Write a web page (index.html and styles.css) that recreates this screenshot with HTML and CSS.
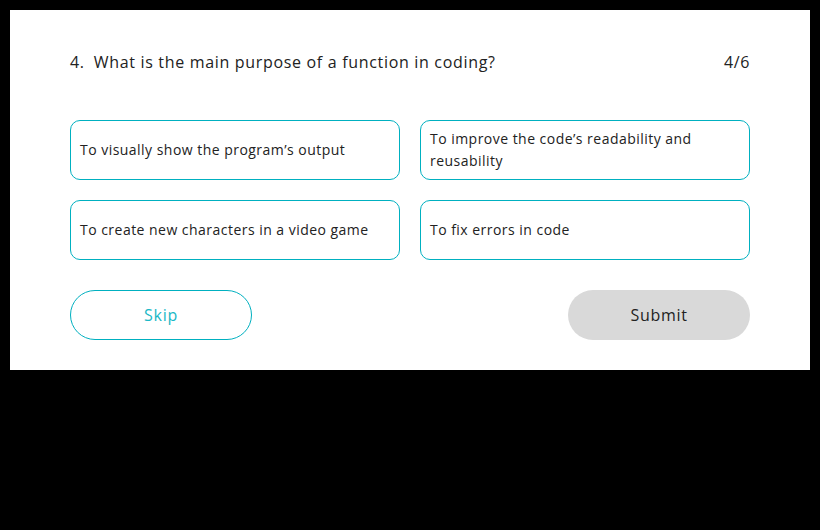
FILE: index.html
```html
<!DOCTYPE html>
<html lang="en">
<head>
<meta charset="utf-8">
<title>Quiz</title>
<link rel="stylesheet" href="styles.css">
</head>
<body>
<main class="panel">
  <header class="question-row">
    <h1 class="question"><span class="qnum">4.</span><span>What is the main purpose of a function in coding?</span></h1>
    <span class="progress">4/6</span>
  </header>
  <section class="options">
    <button class="option">To visually show the program’s output</button>
    <button class="option">To improve the code’s readability and reusability</button>
    <button class="option">To create new characters in a video game</button>
    <button class="option">To fix errors in code</button>
  </section>
  <footer class="actions">
    <button class="btn btn-skip">Skip</button>
    <button class="btn btn-submit">Submit</button>
  </footer>
</main>
</body>
</html>
```
FILE: styles.css
```css
* { box-sizing: border-box; }
html, body { margin: 0; }
body {
  background: #000;
  padding: 10px;
  width: 820px;
  height: 530px;
  font-family: "Open Sans", "DejaVu Sans", sans-serif;
  color: #222;
}
.panel {
  background: #fff;
  width: 800px;
  height: 360px;
  padding: 40px 60px 0 60px;
}
.question-row {
  display: flex;
  justify-content: space-between;
  align-items: center;
  height: 24px;
}
.question {
  margin: 0;
  font-size: 16px;
  font-weight: 400;
  letter-spacing: 0.68px;
  display: flex;
  gap: 9px;
}
.progress { font-size: 16px; letter-spacing: 0.6px; }
.option {
  font-family: inherit;
  font-size: 14px;
  line-height: 22px;
  letter-spacing: 0.47px;
  color: #222;
  text-align: left;
  background: #fff;
  border: 1px solid #00b0c0;
  border-radius: 10px;
  padding: 0 10px 0 9px;
  display: flex;
  align-items: center;
}
.options {
  margin-top: 46px;
  display: grid;
  grid-template-columns: 330px 330px;
  grid-auto-rows: 60px;
  gap: 20px;
}
.actions {
  margin-top: 30px;
  display: flex;
  justify-content: space-between;
}
.btn {
  width: 182px;
  height: 50px;
  border-radius: 25px;
  font-family: inherit;
  font-size: 16px;
  letter-spacing: 0.7px;
}
.btn-skip {
  background: #fff;
  border: 1px solid #00b0c0;
  color: #1ab8c6;
}
.btn-submit {
  background: #d9d9d9;
  border: none;
  color: #222;
}
```
